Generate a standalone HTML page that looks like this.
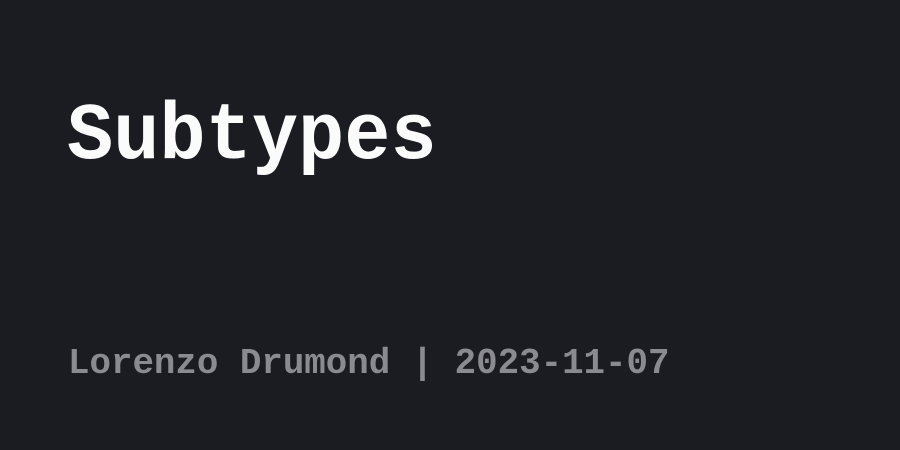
<!DOCTYPE html>
<html><head><style>
html,body{margin:0;padding:0;}
body{width:900px;height:450px;background:#1b1c22;position:relative;overflow:hidden;font-family:"Liberation Mono",monospace;font-weight:bold;}
.t{position:absolute;left:67px;top:97px;font-size:77px;line-height:1;color:#fbfbfb;white-space:nowrap;transform:scaleY(1.05);transform-origin:0 0;}
.s{position:absolute;left:68px;top:346px;font-size:35.8px;line-height:1;color:#8b8b8f;white-space:nowrap;}
</style></head><body>
<div class="t">Subtypes</div>
<div class="s">Lorenzo Drumond | 2023-11-07</div>
</body></html>
